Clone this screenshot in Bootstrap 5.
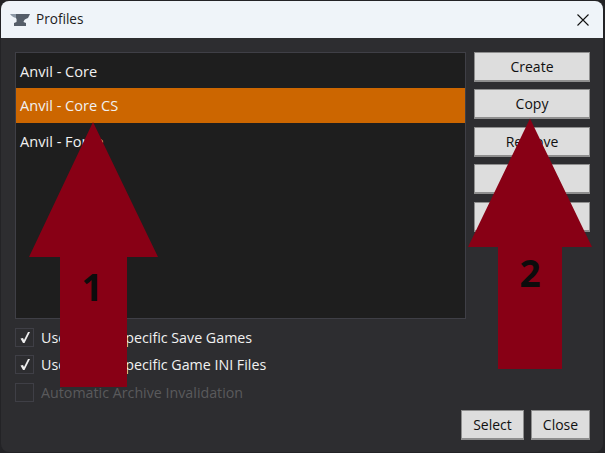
<!DOCTYPE html>
<html lang="en"><head><meta charset="utf-8"><title>Profiles</title>
<link rel="stylesheet" href="https://cdn.jsdelivr.net/npm/bootstrap@5.3.0/dist/css/bootstrap.min.css">
<style>
html,body{height:453px;width:605px;overflow:hidden;background:#232326;margin:0}
body{font-family:"Open Sans","Noto Sans",sans-serif;font-size:14px;line-height:1.2;position:relative}
.win{margin:1px 1px 0 1px;width:602px;height:451px;background:#2d2d30;border-radius:8px;overflow:hidden;display:flex;flex-direction:column}
.tbar{height:37px;background:#eff4f9;color:#1d1d1d;padding-left:9px;gap:6px;flex:none}
.tbar .ttl{font-size:13.600px}
.tbar .xbtn{margin-left:auto;margin-right:14px;display:block}
.wbody{padding:14px 13px 14px 14px;flex:1;min-height:0}
.top-row{gap:8px;height:267px}
.plist{width:451px;background:#1e1e1e;border:1px solid #3f3f46;flex:none}
.pitem{height:35px;display:flex;align-items:center;padding:2px 0 0 4px;color:#f1f1f1;font-size:14.600px}
.pitem.sel{background:#cc6600;padding-top:1px}
.bcol{width:116px;flex:none}
.wbtn{width:116px;height:30px;background:#dddddd;border:1px solid #8e8e8e;border-bottom-width:2px;color:#101010;font-size:14px;padding:0;display:block;border-radius:0;line-height:1}
.gap7{margin-bottom:7px}.gap8{margin-bottom:8px}
.checks{margin-top:9px;height:74px}
.cline{display:flex;align-items:center;height:19px;color:#f1f1f1;gap:7px;font-size:14.250px}
.cline.l2{margin-top:8px}.cline.l3{margin-top:9px;color:#5a5a5c}
.ctext{padding-top:1px}
.cb{width:19px;height:19px;border:1px solid #3f3f46;background:#2d2d30;display:flex;align-items:center;justify-content:center;flex:none}
.foot{justify-content:flex-end;gap:7px;margin-top:8px}
.foot .w1{width:63px}.foot .w2{width:59px}
.arrows{position:absolute;left:0;top:0;pointer-events:none}
.arrows text{font-family:"Open Sans",sans-serif;font-weight:700;font-size:37px;fill:#0c0c0c;text-anchor:middle}
</style></head>
<body>
<div class="win">
  <div class="tbar d-flex align-items-center">
    <svg width="20" height="12" viewBox="0 0 20 12"><path d="M0 0H7V4Q3 4 0 0Z" fill="#8d99a6"/><path d="M6 0H20L18 4Q14 5 13.500 8L16 9V12H4V9L6.500 8Q7 5 6 4Z" fill="#555e69"/></svg>
    <span class="ttl">Profiles</span>
    <svg class="xbtn" width="12" height="12" viewBox="0 0 12 12"><path d="M.5.5 11.500 11.500M11.500.5.5 11.500" stroke="#111" stroke-width="1.100" fill="none"/></svg>
  </div>
  <div class="wbody">
    <div class="top-row d-flex">
      <div class="plist">
        <div class="pitem">Anvil - Core</div>
        <div class="pitem sel">Anvil - Core CS</div>
        <div class="pitem">Anvil - Forge</div>
      </div>
      <div class="bcol">
        <button class="wbtn gap7">Create</button>
        <button class="wbtn gap8">Copy</button>
        <button class="wbtn gap7">Remove</button>
        <button class="wbtn gap8">Rename</button>
        <button class="wbtn">Transfer</button>
      </div>
    </div>
    <div class="checks">
      <div class="cline"><span class="cb"><svg width="12" height="13" viewBox="0 0 12 13"><path d="M1.500 7.500 4 7 5 9 9 1H11L5.500 12H4Z" fill="#eee"/></svg></span><span class="ctext">Use Profile-Specific Save Games</span></div>
      <div class="cline l2"><span class="cb"><svg width="12" height="13" viewBox="0 0 12 13"><path d="M1.500 7.500 4 7 5 9 9 1H11L5.500 12H4Z" fill="#eee"/></svg></span><span class="ctext">Use Profile-Specific Game INI Files</span></div>
      <div class="cline l3"><span class="cb"></span><span class="ctext">Automatic Archive Invalidation</span></div>
    </div>
    <div class="foot d-flex">
      <button class="wbtn w1">Select</button>
      <button class="wbtn w2">Close</button>
    </div>
  </div>
</div>
<svg class="arrows" width="605" height="453" viewBox="0 0 605 453">
  <path d="M93 122 158 257H127V387H60V257H29Z" fill="#880015"/>
  <path d="M530 118.500 592 247H562V369H498V247H468Z" fill="#880015"/>
  <text x="92" y="301">1</text>
  <text x="530" y="287">2</text>
</svg>
</body></html>
